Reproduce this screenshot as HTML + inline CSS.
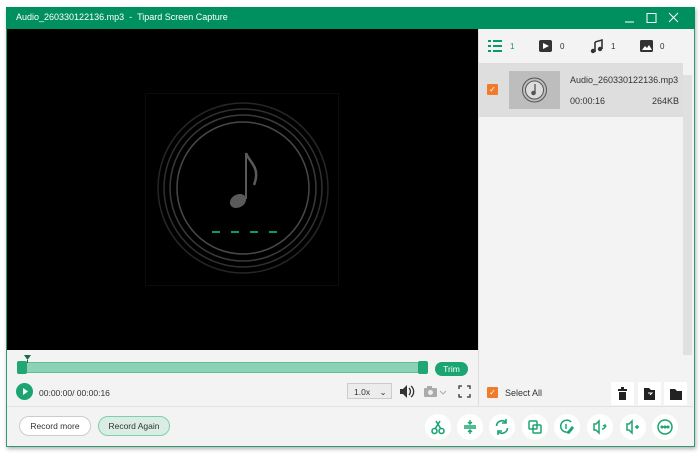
<!DOCTYPE html>
<html><head><style>
*{margin:0;padding:0;box-sizing:border-box}
body{width:700px;height:454px;background:#fff;font-family:"Liberation Sans",sans-serif;position:relative;overflow:hidden}
.a{position:absolute}
.t{font-size:9px;color:#333}
.ic{position:absolute;width:26px;height:26px;border-radius:50%;background:#fff;top:414px}
.ic svg{width:26px;height:26px}
</style></head><body>
<div class="a" style="left:6px;top:7px;width:689px;height:440px;background:#f3f3f3;border:1px solid #2e9b6c;box-shadow:1px 2px 4px rgba(0,0,0,.3)"></div>
<div class="a" style="left:6px;top:7px;width:689px;height:22px;background:#00905f"></div>
<div class="a" style="left:16px;top:12px;font-size:9px;color:#fff">Audio_260330122136.mp3 &nbsp;- &nbsp;Tipard Screen Capture</div>
<svg class="a" style="left:620px;top:10px" width="72" height="16" fill="none" stroke="#fff" stroke-width="1"><path d="M5 12h9M27 3.5h9v9h-9zM49 3l9 9M58 3l-9 9"/></svg>
<div class="a" style="left:7px;top:29px;width:471px;height:321px;background:#000"></div>
<div class="a" style="left:145px;top:93px;width:194px;height:193px;border:1px solid #0c0c0c"></div>
<svg class="a" style="left:150px;top:95px" width="190" height="190" fill="none" stroke-width="1.5">
<circle cx="93" cy="93" r="85" stroke="#262626"/><circle cx="93" cy="93" r="79" stroke="#303030"/><circle cx="93" cy="93" r="73" stroke="#3a3a3a"/><circle cx="93" cy="93" r="66" stroke="#484848"/>
<path d="M96 58v46" stroke="#5a5a5a" stroke-width="2"/><path d="M96 58c3 9 15 14 8 32" stroke="#5a5a5a" stroke-width="2.5"/>
<ellipse cx="88" cy="106" rx="8.5" ry="6.5" fill="#5a5a5a" stroke="none" transform="rotate(-30 88 106)"/>
<path d="M62 137h8M81 137h8M100 137h8M119 137h8" stroke="#0c9a66" stroke-width="2"/>
</svg>
<div class="a" style="left:478px;top:29px;width:215px;height:377px;background:#f3f3f3;border-left:1px solid #ddd"></div>
<div class="a" style="left:683px;top:75px;width:9px;height:280px;background:#e0e0e0"></div>
<svg class="a" style="left:487px;top:38px" width="190" height="16">
<g fill="#0c9a66"><rect x="1" y="2" width="3" height="2"/><rect x="6" y="2" width="9" height="2"/><rect x="1" y="7" width="3" height="2"/><rect x="6" y="7" width="9" height="2"/><rect x="1" y="12" width="3" height="2"/><rect x="6" y="12" width="9" height="2"/></g>
<text x="23" y="11" font-size="8" fill="#0c9a66" font-family="Liberation Sans">1</text>
<rect x="52" y="2" width="13" height="12" rx="2" fill="#333"/><path d="M56 5l6 3-6 3z" fill="#fff"/>
<text x="73" y="11" font-size="8" fill="#333" font-family="Liberation Sans">0</text>
<path d="M108 4l7-2v9M108 4v10" stroke="#333" stroke-width="1.6" fill="none"/><circle cx="106" cy="13" r="2.2" fill="#333"/><circle cx="113" cy="11" r="2.2" fill="#333"/>
<text x="124" y="11" font-size="8" fill="#333" font-family="Liberation Sans">1</text>
<rect x="153" y="2" width="13" height="12" rx="1.5" fill="#333"/><path d="M155 12l3-4 2 2 2-3 3 5z" fill="#fff"/>
<text x="173" y="11" font-size="8" fill="#333" font-family="Liberation Sans">0</text>
</svg>
<div class="a" style="left:479px;top:63px;width:204px;height:54px;background:#dedede"></div>
<div class="a" style="left:487px;top:84px;width:11px;height:11px;background:#f07b2c;border-radius:1px;color:#fff;font-size:8px;text-align:center;line-height:11px">✓</div>
<div class="a" style="left:509px;top:71px;width:51px;height:38px;background:#bdbdbd"></div>
<svg class="a" style="left:509px;top:71px" width="51" height="38" fill="none" stroke="#555"><circle cx="25.5" cy="19" r="12"/><circle cx="25.5" cy="19" r="9" fill="#ddd"/><path d="M26 13v9" stroke-width="1.3"/><circle cx="24.5" cy="22" r="1.8" fill="#555"/></svg>
<div class="a t" style="left:570px;top:75px">Audio_260330122136.mp3</div>
<div class="a t" style="left:570px;top:96px">00:00:16</div>
<div class="a t" style="left:652px;top:96px">264KB</div>
<div class="a" style="left:17px;top:362px;width:410px;height:11px;background:#8ed2b6;border-top:1px solid #5bbf97;border-bottom:1px solid #5bbf97"></div>
<div class="a" style="left:17px;top:361px;width:10px;height:13px;background:#21a773;border-radius:2px"></div>
<div class="a" style="left:418px;top:361px;width:10px;height:13px;background:#21a773;border-radius:2px"></div>
<svg class="a" style="left:24px;top:355px" width="8" height="8"><path d="M0 0h7L3.5 5z" fill="#1a6b4a"/><path d="M3.5 5v3" stroke="#1a6b4a"/></svg>
<div class="a" style="left:435px;top:362px;width:33px;height:14px;background:#1aa572;border-radius:7px;color:#fff;font-size:8.5px;text-align:center;line-height:14px">Trim</div>
<div class="a" style="left:16px;top:383px;width:17px;height:17px;border-radius:50%;background:#1aa572"></div>
<svg class="a" style="left:16px;top:383px" width="17" height="17"><path d="M7 5l5 3.5-5 3.5z" fill="#fff"/></svg>
<div class="a t" style="left:39px;top:388px;font-size:8.5px">00:00:00/ 00:00:16</div>
<div class="a" style="left:347px;top:383px;width:45px;height:16px;border:1px solid #ccc;background:#ececec;font-size:8.5px;color:#333;padding:3px 0 0 6px">1.0x &nbsp;&nbsp;&nbsp;⌄</div>
<svg class="a" style="left:398px;top:383px" width="75" height="17"><path d="M2 6h3l4-4v13l-4-4H2z" fill="#333"/><path d="M11 5a5 5 0 0 1 0 7M13 3a7 7 0 0 1 0 11" stroke="#333" fill="none" stroke-width="1.3"/>
<rect x="26" y="5" width="13" height="9" rx="1" fill="#aaa"/><rect x="29" y="3" width="5" height="3" fill="#aaa"/><circle cx="32.5" cy="9.5" r="2.5" fill="#eee"/><path d="M42 8l3 3 3-3" stroke="#aaa" fill="none"/>
<path d="M61 6V3h3M69 3h3v3M61 11v3h3M72 11v3h-3" stroke="#333" fill="none" stroke-width="1.3"/></svg>
<div class="a" style="left:487px;top:387px;width:11px;height:11px;background:#f07b2c;border-radius:1px;color:#fff;font-size:8px;text-align:center;line-height:11px">✓</div>
<div class="a t" style="left:505px;top:388px">Select All</div>
<div class="a" style="left:611px;top:382px;width:23px;height:23px;background:#fff"></div>
<div class="a" style="left:638px;top:382px;width:23px;height:23px;background:#fff"></div>
<div class="a" style="left:664px;top:382px;width:23px;height:23px;background:#fff"></div>
<svg class="a" style="left:611px;top:382px" width="80" height="23" fill="#222"><rect x="7" y="7" width="9" height="2"/><rect x="10" y="5" width="3" height="2"/><rect x="8" y="10" width="7" height="8"/>
<path d="M33 6h5l2 2h4v10H33z"/><path d="M37 11h4l-2 2" stroke="#fff" fill="none"/>
<path d="M59 7h5l2 2h5v9H59z"/></svg>
<div class="a" style="left:7px;top:406px;width:686px;height:1px;background:#e2e2e2"></div>
<div class="a" style="left:19px;top:416px;width:72px;height:20px;border:1px solid #ccc;border-radius:10px;background:#fff;font-size:8.5px;color:#333;text-align:center;line-height:18px">Record more</div>
<div class="a" style="left:98px;top:416px;width:72px;height:20px;border:1px solid #7fcfac;border-radius:10px;background:#d9ede4;font-size:8.5px;color:#333;text-align:center;line-height:18px">Record Again</div>
<div class="ic" style="left:425px"><svg fill="none" stroke="#1aa572" stroke-width="1.6"><circle cx="9.5" cy="17" r="2.5"/><circle cx="16.5" cy="17" r="2.5"/><path d="M10 15l5-8M16 15l-5-8"/></svg></div>
<div class="ic" style="left:457px"><svg fill="none" stroke="#1aa572" stroke-width="1.4"><path d="M7 12h12M7 14h12M13 6v4M11 8l2 2 2-2M13 20v-4M11 18l2-2 2 2"/></svg></div>
<div class="ic" style="left:489px"><svg fill="none" stroke="#1aa572" stroke-width="1.6"><path d="M7.5 12a5.5 5.5 0 0 1 9.5-3.5M18.5 14a5.5 5.5 0 0 1-9.5 3.5"/><path d="M17 5v4h-4M9 21v-4h4"/></svg></div>
<div class="ic" style="left:522px"><svg fill="none" stroke="#1aa572" stroke-width="1.5"><rect x="7" y="7" width="8" height="8" rx="1"/><rect x="11" y="11" width="8" height="8" rx="1"/></svg></div>
<div class="ic" style="left:554px"><svg fill="none" stroke="#1aa572" stroke-width="1.5"><path d="M17 8a6 6 0 1 0 1 7"/><path d="M12 10v5"/><path d="M14 18l4-5 1 1-4 5h-1z"/></svg></div>
<div class="ic" style="left:587px"><svg fill="none" stroke="#1aa572" stroke-width="1.5"><path d="M7 10h2l3-3v12l-3-3H7z"/><path d="M15 15a3 3 0 0 0 3-4l-2 1M18 11l1 2"/></svg></div>
<div class="ic" style="left:620px"><svg fill="none" stroke="#1aa572" stroke-width="1.5"><path d="M7 10h2l3-3v12l-3-3H7z"/><path d="M15 13h4M17 11v4"/></svg></div>
<div class="ic" style="left:652px"><svg fill="none" stroke="#1aa572" stroke-width="1.5"><circle cx="13" cy="13" r="7"/><circle cx="10" cy="13" r=".8" fill="#1aa572"/><circle cx="13" cy="13" r=".8" fill="#1aa572"/><circle cx="16" cy="13" r=".8" fill="#1aa572"/></svg></div>
</body></html>
